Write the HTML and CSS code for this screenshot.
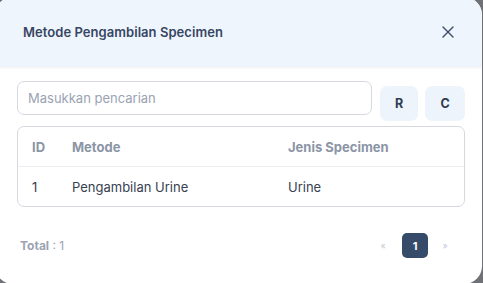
FILE: index.html
```html
<!DOCTYPE html>
<html>
<head>
<meta charset="utf-8">
<link rel="stylesheet" href="styles.css">
</head>
<body>
<div class="modal">
  <div class="modal-header">
    <h2 class="title">Metode Pengambilan Specimen</h2>
    <button class="close" aria-label="close">
      <svg width="12" height="12" viewBox="0 0 12 12"><path d="M1 1L11 11M11 1L1 11" stroke="#3b4a63" stroke-width="1.4" stroke-linecap="round"/></svg>
    </button>
  </div>
  <div class="modal-body">
    <div class="search-row">
      <input class="search" type="text" placeholder="Masukkan pencarian">
      <button class="btn btn-r">R</button>
      <button class="btn btn-c">C</button>
    </div>
    <div class="table-wrap">
      <table class="table">
        <thead>
          <tr><th class="c-id">ID</th><th class="c-met">Metode</th><th>Jenis Specimen</th></tr>
        </thead>
        <tbody>
          <tr><td class="c-id">1</td><td class="c-met">Pengambilan Urine</td><td>Urine</td></tr>
        </tbody>
      </table>
    </div>
    <div class="footer">
      <div class="total"><b>Total</b> : 1</div>
      <div class="pager">
        <span class="arrow">«</span>
        <span class="page">1</span>
        <span class="arrow">»</span>
      </div>
    </div>
  </div>
</div>
</body>
</html>
```
FILE: styles.css
```css
html, body {
  margin: 0;
  padding: 0;
  width: 483px;
  height: 283px;
  overflow: hidden;
  background: #707176;
  font-family: "Inter", "Noto Sans", sans-serif;
}
.modal {
  position: absolute;
  left: -5px;
  top: -3px;
  width: 487px;
  height: 287px;
  background: #ffffff;
  border-radius: 18px;
  overflow: hidden;
}
.modal-header {
  height: 70px;
  background: #eff5fd;
  display: flex;
  align-items: center;
  justify-content: space-between;
  padding: 0 28px 0 28px;
  box-sizing: border-box;
  box-shadow: 0 1px 2px rgba(0,0,0,0.06);
}
.title {
  margin: 0;
  font-size: 13px;
  font-weight: 600;
  color: #374662;
  letter-spacing: 0.05px;
}
.close {
  border: 0;
  background: none;
  padding: 0;
  width: 12px;
  height: 12px;
  display: flex;
}
.modal-body {
  padding: 14px 17px 0 22px;
}
.search-row {
  display: flex;
  align-items: flex-start;
}
.search {
  flex: 0 0 355px;
  width: 355px;
  height: 34px;
  box-sizing: border-box;
  border: 1px solid #d5d9df;
  border-radius: 7px;
  padding: 0 10px;
  font-family: inherit;
  font-size: 13px;
  color: #374151;
  outline: none;
}
.search::placeholder {
  color: #9aa3b2;
}
.btn {
  flex: 0 0 auto;
  margin-top: 5px;
  height: 35px;
  border: 0;
  border-radius: 7px;
  background: #eef4fc;
  color: #2f3b52;
  font-family: inherit;
  font-weight: 700;
  font-size: 12.5px;
  padding: 0;
}
.btn-r { width: 38px; margin-left: 8px; }
.btn-c { width: 40px; margin-left: 7px; }
.table-wrap {
  margin-top: 5px;
  width: 448px;
  border: 1px solid #d5d9df;
  border-radius: 7px;
  box-sizing: border-box;
  overflow: hidden;
}
.table {
  width: 100%;
  border-collapse: collapse;
  font-size: 13px;
}
.table th {
  text-align: left;
  color: #8b95a6;
  font-weight: 700;
  height: 39px;
  padding: 0;
  border-bottom: 1px solid #eceef1;
}
.table td {
  color: #374151;
  height: 39px;
  padding: 0;
}
.table .c-id { width: 40px; padding-left: 14px; }
.table .c-met { width: 216px; }
.footer {
  margin-top: 26px;
  display: flex;
  align-items: center;
  justify-content: space-between;
  padding: 0 16px 0 3px;
  height: 25px;
}
.total {
  font-size: 12px;
  color: #9aa3b2;
}
.total b { font-weight: 700; }
.pager {
  display: flex;
  align-items: center;
}
.arrow {
  font-size: 9px;
  color: #c3c9d3;
  width: 8px;
  text-align: center;
}
.page {
  margin: 0 13px 0 15px;
  width: 26px;
  height: 25px;
  border-radius: 5px;
  background: #364a6a;
  color: #ffffff;
  font-size: 11px;
  font-weight: 700;
  display: flex;
  align-items: center;
  justify-content: center;
}
```
